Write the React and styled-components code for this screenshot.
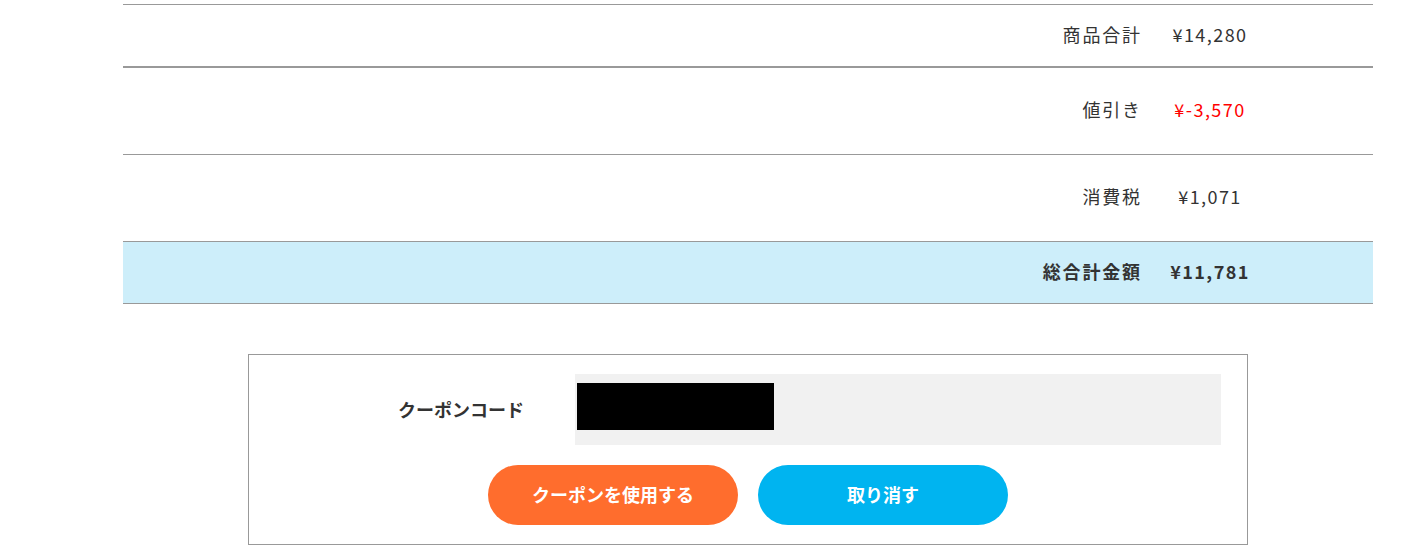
import styled, { createGlobalStyle } from "styled-components"

// Order summary table and the coupon entry box under it.

const GlobalStyle = createGlobalStyle`
    body {
        margin: 0;
        background: #ffffff;
        font-family: "Noto Sans CJK JP", "Noto Sans", sans-serif;
        color: #333333;
    }
`

const Page = styled.div`
    padding: 4px 0 0 123px;
    width: 1250px;
`

const Summary = styled.div`
    border-top: 1px solid #999999;
    border-bottom: 1px solid #999999;
`

const Row = styled.div`
    display: flex;
    align-items: center;
    justify-content: flex-end;
    height: ${p => p.height}px;
    box-sizing: border-box;
    padding: 0 103px 4px 0;
    border-bottom: ${p => p.$thick ? "2px" : "1px"} solid #999999;
    background: ${p => p.$total ? "#cdeefa" : "transparent"};
    font-weight: ${p => p.$total ? 700 : 400};

    &:last-child {
        border-bottom: none;
    }
`

const Label = styled.div`
    font-size: 18px;
    letter-spacing: 0.1em;
    margin-right: -1.8px;
    text-align: right;
`

const Value = styled.div`
    width: 120px;
    margin-left: 10px;
    font-size: 18px;
    letter-spacing: 0.08em;
    text-align: center;
    color: ${p => p.$red ? "#ff0000" : "#333333"};
`

const CouponBox = styled.div`
    width: 1000px;
    margin: 50px 0 0 248px;
    border: 1px solid #999999;
    box-sizing: border-box;
    padding: 19px 26px 19px 0;
`

const FieldRow = styled.div`
    display: flex;
    align-items: center;
`

const FieldLabel = styled.div`
    width: 326px;
    box-sizing: border-box;
    padding: 0 51px 2px 0;
    text-align: right;
    font-size: 18px;
    font-weight: 700;
`

const Field = styled.div`
    flex: 1;
    height: 71px;
    background: #f1f1f1;
    padding: 9px 0 0 2px;
    box-sizing: border-box;
`

const Redacted = styled.div`
    width: 197px;
    height: 47px;
    background: #000000;
`

const Buttons = styled.div`
    display: flex;
    justify-content: center;
    gap: 20px;
    margin-top: 20px;
    padding-left: 26px;
`

const Button = styled.button`
    width: 250px;
    height: 60px;
    padding: 0 0 2px;
    border: none;
    border-radius: 30px;
    background: ${p => p.$color};
    color: #ffffff;
    font-family: "Noto Sans CJK JP", "Noto Sans", sans-serif;
    font-size: 18px;
    font-weight: 700;
    cursor: pointer;
`

const rows = [
    { label: "商品合計", value: "¥14,280", height: 63, thick: true },
    { label: "値引き", value: "¥-3,570", height: 87, red: true },
    { label: "消費税", value: "¥1,071", height: 87 },
    { label: "総合計金額", value: "¥11,781", height: 61, total: true },
]

export default function App() {
    return (
        <>
            <GlobalStyle />
            <Page>
                <Summary>
                    {rows.map(r => (
                        <Row key={r.label} height={r.height} $thick={r.thick} $total={r.total}>
                            <Label>{r.label}</Label>
                            <Value $red={r.red}>{r.value}</Value>
                        </Row>
                    ))}
                </Summary>
            </Page>
            <CouponBox>
                <FieldRow>
                    <FieldLabel>クーポンコード</FieldLabel>
                    <Field>
                        <Redacted />
                    </Field>
                </FieldRow>
                <Buttons>
                    <Button $color="#ff6d2d">クーポンを使用する</Button>
                    <Button $color="#00b4f0">取り消す</Button>
                </Buttons>
            </CouponBox>
        </>
    )
}
